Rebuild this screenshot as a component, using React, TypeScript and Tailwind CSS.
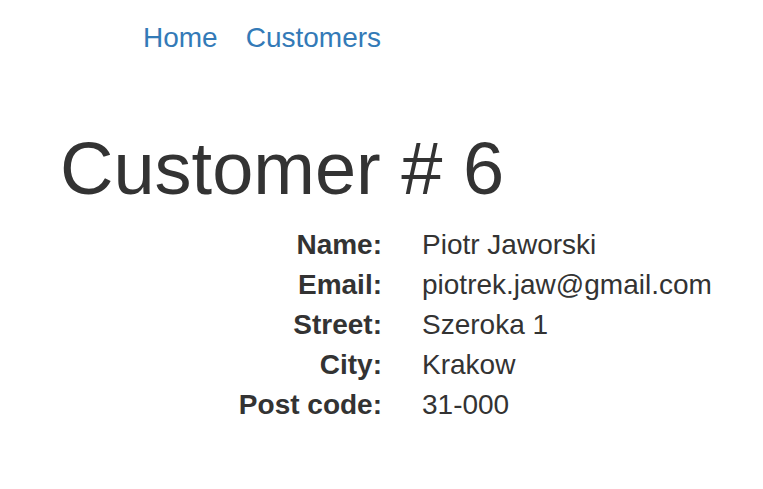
import React from "react";

const rows: [string, string][] = [
  ["Name:", "Piotr Jaworski"],
  ["Email:", "piotrek.jaw@gmail.com"],
  ["Street:", "Szeroka 1"],
  ["City:", "Krakow"],
  ["Post code:", "31-000"],
];

export default function App() {
  return (
    <div
      className="min-h-[489px] w-full bg-white pt-[18px] text-[#333333]"
      style={{ fontFamily: '"Liberation Sans", Arial, Helvetica, sans-serif' }}
    >
      <nav className="flex gap-[28px] pl-[143px] text-[28px] leading-[40px]">
        <a href="#" className="text-[#337ab7]">Home</a>
        <a href="#" className="text-[#337ab7]">Customers</a>
      </nav>
      <h1 className="mt-[71px] pl-[60px] text-[74px] leading-[80px] font-normal">
        Customer # 6
      </h1>
      <dl className="mt-[16px] pl-[62px] text-[28px] leading-[40px]">
        {rows.map(([k, v]) => (
          <div key={k} className="flex">
            <dt className="w-[320px] text-right font-bold">{k}</dt>
            <dd className="ml-[40px]">{v}</dd>
          </div>
        ))}
      </dl>
    </div>
  );
}
